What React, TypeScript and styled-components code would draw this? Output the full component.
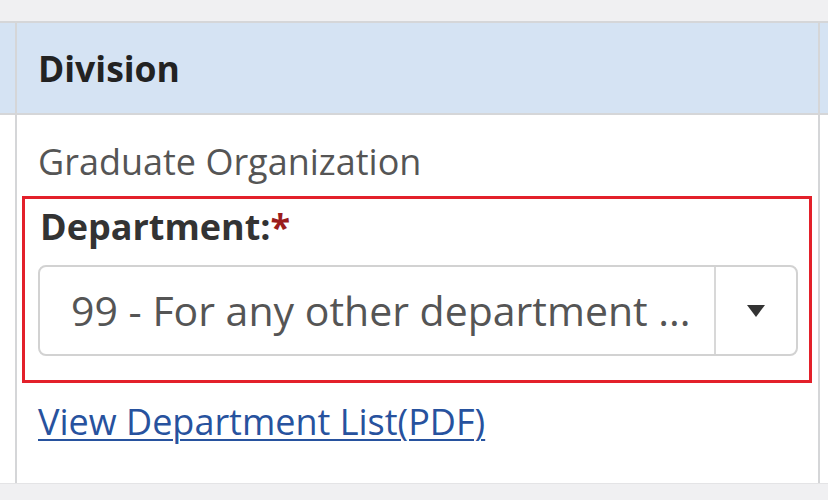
import React from "react";
import styled, { createGlobalStyle } from "styled-components";

const Global = createGlobalStyle`
  html, body { margin: 0; padding: 0; background: #f0f0f2; }
  body { font-family: "Open Sans", "Liberation Sans", sans-serif; }
`;

const Page = styled.div`
  width: 828px;
  height: 500px;
  overflow: hidden;
  padding-top: 21px;
  box-sizing: border-box;
  background: #f0f0f2;
`;

const Table = styled.div`
  display: grid;
  grid-template-columns: 15px 1fr 8px;
  grid-template-rows: 90px auto;
  gap: 2px;
  background: #d5d6d8;
  border-top: 2px solid #d5d6d8;
  border-bottom: 1px solid #e4e4e6;
`;

const HeadCell = styled.div<{ $edge?: boolean }>`
  background: #d5e3f3;
  display: flex;
  align-items: center;
  padding-left: ${(p) => (p.$edge ? 0 : 21)}px;
  font-weight: 700;
  font-size: 35.5px;
  color: #222;
  overflow: hidden;
`;

const BodyCell = styled.div<{ $edge?: boolean }>`
  background: #fff;
  padding: ${(p) => (p.$edge ? "0" : "23px 21px 38px 21px")};
  font-size: 36px;
  line-height: 47px;
  color: #555;
  overflow: hidden;
`;

const Value = styled.div`
  color: #555;
`;

const Highlight = styled.div`
  margin: 11px -15px 15px -16px;
  border: 3px solid #e3202a;
  padding: 4px 11px 24px 13px;
`;

const Label = styled.div`
  font-weight: 700;
  font-size: 36px;
  color: #333;
  margin-left: 2px;
`;

const Required = styled.span`
  color: #9b1c1c;
`;

const Select = styled.div`
  margin-top: 15px;
  height: 91px;
  box-sizing: border-box;
  border: 2px solid #d2d2d2;
  border-radius: 8px;
  display: flex;
  background: #fff;
`;

const SelectText = styled.div`
  flex: 1;
  display: flex;
  align-items: center;
  padding-left: 31px;
  font-size: 41px;
  color: #555;
  white-space: nowrap;
  overflow: hidden;
`;

const ArrowBox = styled.div`
  width: 80px;
  border-left: 2px solid #d8d8d8;
  display: flex;
  align-items: center;
  justify-content: center;
`;

const Link = styled.a`
  color: #27529e;
  text-decoration: underline;
  text-underline-offset: 4px;
  text-decoration-thickness: 2px;
`;

export default function App() {
  return (
    <Page>
      <Global />
      <Table>
        <HeadCell $edge />
        <HeadCell>Division</HeadCell>
        <HeadCell $edge />
        <BodyCell $edge />
        <BodyCell>
          <Value>Graduate Organization</Value>
          <Highlight>
            <Label>
              Department:<Required>*</Required>
            </Label>
            <Select>
              <SelectText>99 - For any other department ...</SelectText>
              <ArrowBox>
                <svg width="18" height="12" viewBox="0 0 18 12">
                  <path d="M0 0 H18 L9 12 Z" fill="#333" />
                </svg>
              </ArrowBox>
            </Select>
          </Highlight>
          <Link href="#">View Department List(PDF)</Link>
        </BodyCell>
        <BodyCell $edge />
      </Table>
    </Page>
  );
}
